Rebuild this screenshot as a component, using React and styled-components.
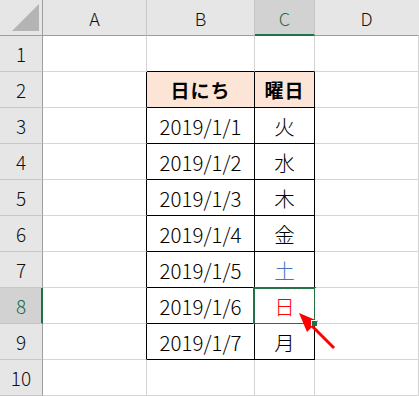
import React from "react";
import styled, { createGlobalStyle, css } from "styled-components";

const Global = createGlobalStyle`
  html, body { margin: 0; padding: 0; background: #fff; }
  body { font-family: "Noto Sans CJK JP", "Noto Sans", sans-serif; overflow: hidden; }
`;

const Sheet = styled.div`
  position: relative;
  display: grid;
  grid-template-columns: 43px 104px 108px 60px 104px;
  grid-auto-rows: 36px;
  width: 419px;
  height: 396px;
  overflow: hidden;
`;

const Corner = styled.div`
  background: #e6e6e6;
  border-right: 1px solid #9e9e9e;
  border-bottom: 1px solid #9e9e9e;
  display: flex;
  align-items: flex-end;
  justify-content: flex-end;
  padding: 0 3px 4px 0;
`;

const ColHead = styled.div`
  background: ${(p) => (p.$active ? "#d2d2d2" : "#e6e6e6")};
  border-right: 1px solid ${(p) => (p.$last ? "#e6e6e6" : "#c6c6c6")};
  border-bottom: ${(p) => (p.$active ? "2px solid #217346" : "1px solid #9e9e9e")};
  display: flex;
  align-items: center;
  justify-content: center;
  font-size: 18px;
  font-weight: 300;
  color: ${(p) => (p.$active ? "#1e6b48" : "#111")};
  padding-top: ${(p) => (p.$active ? "1px" : "0")};
`;

const RowHead = styled.div`
  background: ${(p) => (p.$active ? "#d2d2d2" : "#e6e6e6")};
  border-right: ${(p) => (p.$active ? "2px solid #217346" : "1px solid #9e9e9e")};
  border-bottom: 1px solid #c6c6c6;
  display: flex;
  align-items: center;
  justify-content: center;
  font-size: 19px;
  font-weight: 300;
  color: ${(p) => (p.$active ? "#1e6b48" : "#111")};
  padding-left: ${(p) => (p.$active ? "1px" : "0")};
`;

const Cell = styled.div`
  position: relative;
  background: ${(p) => p.$bg || "#fff"};
  border-right: 1px solid ${(p) => (p.$br ? "#000" : "#d4d4d4")};
  border-bottom: 1px solid ${(p) => (p.$bb ? "#000" : "#d4d4d4")};
  display: flex;
  align-items: center;
  justify-content: center;
  font-size: ${(p) => (p.$bold ? "19px" : "20.5px")};
  font-weight: ${(p) => (p.$bold ? 700 : 300)};
  color: ${(p) => p.$color || "#000"};
  letter-spacing: ${(p) => (p.$bold ? "1px" : "0")};
  ${(p) =>
    p.$selected &&
    css`
      &::after {
        content: "";
        position: absolute;
        left: -2px;
        top: -1px;
        width: 59px;
        height: 34px;
        border: 2px solid #217346;
        pointer-events: none;
      }
      &::before {
        content: "";
        position: absolute;
        right: -3px;
        bottom: -3px;
        width: 5px;
        height: 5px;
        background: #217346;
        border-left: 1px solid #fff;
        border-top: 1px solid #fff;
        z-index: 2;
      }
    `}
`;

const ArrowLayer = styled.svg`
  position: absolute;
  left: 0;
  top: 0;
  pointer-events: none;
`;

const cols = ["A", "B", "C", "D"];
const rows = [
  null,
  { b: "日にち", c: "曜日", head: true },
  { b: "2019/1/1", c: "火" },
  { b: "2019/1/2", c: "水" },
  { b: "2019/1/3", c: "木" },
  { b: "2019/1/4", c: "金" },
  { b: "2019/1/5", c: "土", color: "#4472c4" },
  { b: "2019/1/6", c: "日", color: "#ff0000", sel: true },
  { b: "2019/1/7", c: "月" },
  null,
];

export default function App() {
  return (
    <>
      <Global />
      <Sheet>
        <Corner>
          <svg width="27" height="27" viewBox="0 0 27 27">
            <polygon points="27,0 27,27 0,27" fill="#b4b4b4" />
          </svg>
        </Corner>
        {cols.map((c, i) => (
          <ColHead key={c} $active={c === "C"} $last={i === cols.length - 1}>
            {c}
          </ColHead>
        ))}
        {rows.map((r, i) => {
          const n = i + 1;
          const inTable = !!r;
          const aboveTable = n === 1;
          return (
            <React.Fragment key={n}>
              <RowHead $active={r && r.sel}>{n}</RowHead>
              <Cell $br={inTable} />
              <Cell
                $br={inTable}
                $bb={inTable || aboveTable}
                $bg={r && r.head ? "#fce4d6" : undefined}
                $bold={r && r.head}
              >
                {r ? r.b : ""}
              </Cell>
              <Cell
                $br={inTable}
                $bb={inTable || aboveTable}
                $bg={r && r.head ? "#fce4d6" : undefined}
                $bold={r && r.head}
                $color={r && r.color}
                $selected={r && r.sel}
              >
                {r ? r.c : ""}
              </Cell>
              <Cell />
            </React.Fragment>
          );
        })}
        <ArrowLayer width="419" height="396" viewBox="0 0 419 396">
          <line x1="334" y1="348" x2="308" y2="322" stroke="#ff0000" strokeWidth="3" />
          <polygon points="299,313 318,321 307,332" fill="#ff0000" />
        </ArrowLayer>
      </Sheet>
    </>
  );
}
